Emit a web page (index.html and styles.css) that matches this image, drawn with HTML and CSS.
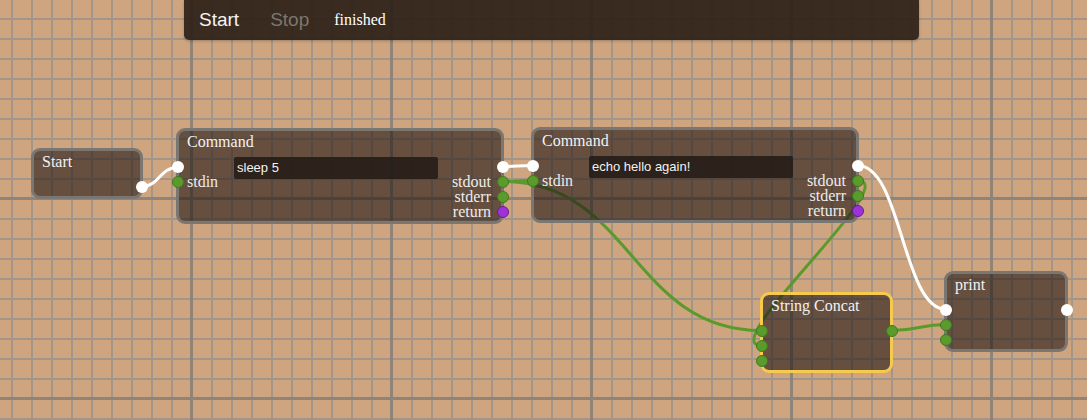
FILE: index.html
```html
<!DOCTYPE html>
<html>
<head>
<meta charset="utf-8">
<link rel="stylesheet" href="styles.css">
</head>
<body>
<div class="canvas">
  <svg class="wires" width="1087" height="420" viewBox="0 0 1087 420">
    <path class="w-exec" d="M141.5,186.5 C159.5,186.5 159.5,167.5 177.5,167.5"/>
    <path class="w-exec" d="M502.5,166.5 C517.5,166.5 517.5,165.5 532.5,165.5"/>
    <path class="w-exec" d="M857.5,165.5 C902,165.5 902,309.5 946.5,309.5"/>
    <path class="w-data" d="M502.5,181.5 C517.5,181.5 517.5,180.5 532.5,180.5"/>
    <path class="w-data" d="M502.5,181.5 C632,181.5 632,330.5 761.5,330.5"/>
    <path class="w-data" d="M857.5,180.5 C905,180.5 714,345.5 761.5,345.5"/>
    <path class="w-data" d="M891.5,330.5 C919,330.5 919,324.5 946.5,324.5"/>
  </svg>

  <div class="toolbar">
    <span class="tb-btn tb-start">Start</span>
    <span class="tb-btn tb-stop">Stop</span>
    <span class="tb-status">finished</span>
  </div>

  <div class="node n-start">
    <div class="title">Start</div>
    <div class="body">
      <div class="col-in"></div>
      <div class="col-out">
        <div class="row"><span class="dot out exec"></span></div>
      </div>
    </div>
  </div>

  <div class="node n-cmd1">
    <div class="title">Command</div>
    <div class="body">
      <div class="col-in cmd-in">
        <div class="row"><span class="dot in exec"></span></div>
        <div class="row"><span class="dot in data"></span><span class="lbl-in">stdin</span></div>
      </div>
      <div class="cmd-input">sleep 5</div>
      <div class="col-out cmd-out">
        <div class="row"><span class="dot out exec"></span></div>
        <div class="row">stdout<span class="dot out data"></span></div>
        <div class="row">stderr<span class="dot out data"></span></div>
        <div class="row">return<span class="dot out ret"></span></div>
      </div>
    </div>
  </div>

  <div class="node n-cmd2">
    <div class="title">Command</div>
    <div class="body">
      <div class="col-in cmd-in">
        <div class="row"><span class="dot in exec"></span></div>
        <div class="row"><span class="dot in data"></span><span class="lbl-in">stdin</span></div>
      </div>
      <div class="cmd-input">echo hello again!</div>
      <div class="col-out cmd-out">
        <div class="row"><span class="dot out exec"></span></div>
        <div class="row">stdout<span class="dot out data"></span></div>
        <div class="row">stderr<span class="dot out data"></span></div>
        <div class="row">return<span class="dot out ret"></span></div>
      </div>
    </div>
  </div>

  <div class="node n-concat selected">
    <div class="title">String Concat</div>
    <div class="body">
      <div class="col-in">
        <div class="row"><span class="dot in data"></span></div>
        <div class="row"><span class="dot in data"></span></div>
        <div class="row"><span class="dot in data"></span></div>
      </div>
      <div class="col-out">
        <div class="row"><span class="dot out data"></span></div>
      </div>
    </div>
  </div>

  <div class="node n-print">
    <div class="title">print</div>
    <div class="body">
      <div class="col-in">
        <div class="row"><span class="dot in exec"></span></div>
        <div class="row"><span class="dot in data"></span></div>
        <div class="row"><span class="dot in data"></span></div>
      </div>
      <div class="col-out">
        <div class="row"><span class="dot out exec"></span></div>
      </div>
    </div>
  </div>
</div>
</body>
</html>
```

FILE: styles.css
```css
* { box-sizing: border-box; }

html, body {
  margin: 0;
  padding: 0;
}

body {
  font-family: "Liberation Serif", "Times New Roman", serif;
  background: #cfa57f;
}

.canvas {
  position: relative;
  width: 1087px;
  height: 420px;
  overflow: hidden;
  background-color: #cfa57f;
  background-image:
    linear-gradient(to right, #8e847a 0, #8e847a 3px, transparent 3px),
    linear-gradient(to bottom, #8e847a 0, #8e847a 3px, transparent 3px),
    linear-gradient(to right, #a39689 0, #a39689 2px, transparent 2px),
    linear-gradient(to bottom, #a39689 0, #a39689 2px, transparent 2px);
  background-size: 200px 200px, 200px 200px, 20px 20px, 20px 20px;
  background-position: 190px 0, 0 197px, 11px 0, 0 18px;
}

.wires {
  position: absolute;
  left: 0;
  top: 0;
}

.wires path {
  fill: none;
  stroke-width: 3;
  stroke-linecap: round;
}

.w-exec { stroke: #ffffff; }
.w-data { stroke: #5a9a2c; }

.toolbar {
  position: absolute;
  left: 184px;
  top: 0;
  width: 735px;
  height: 40px;
  display: flex;
  align-items: center;
  padding-left: 15px;
  background: rgba(44, 33, 23, 0.92);
  border-radius: 0 0 5px 5px;
  box-shadow: 0 1px 3px rgba(0, 0, 0, 0.25);
}

.tb-btn {
  font-family: "Liberation Sans", Arial, sans-serif;
  font-size: 19px;
  line-height: 22px;
}

.tb-start {
  color: #f4f4f4;
  margin-right: 31px;
}

.tb-stop {
  color: #7e766e;
  margin-right: 25px;
}

.tb-status {
  font-family: "Liberation Serif", "Times New Roman", serif;
  font-size: 16px;
  color: #ffffff;
  line-height: 20px;
}

.node {
  position: absolute;
  border: 3px solid #7a7672;
  border-radius: 9px;
  background: rgba(32, 22, 18, 0.6);
  padding: 2px 0 2px;
  color: #ececec;
}

.node.selected {
  border-color: #f6ca4c;
}

.title {
  font-size: 16px;
  line-height: 18px;
  padding-left: 8px;
  color: #f2f2f2;
  white-space: nowrap;
}

.body {
  display: flex;
  margin-top: 8px;
}

.col-in {
  flex: 1;
}

.col-out {
  text-align: right;
}

.row {
  position: relative;
  height: 15px;
  line-height: 15px;
  font-size: 16px;
  white-space: nowrap;
}

.lbl-in {
  padding-left: 8px;
}

.cmd-in {
  flex: 0 0 55px;
}

.cmd-out {
  flex: 1;
  padding-right: 10px;
}

.cmd-input {
  flex: 0 0 204px;
  height: 22px;
  margin-top: -2px;
  padding-left: 3px;
  background: rgba(34, 26, 21, 0.85);
  border-radius: 2px;
  font-family: "Liberation Sans", Arial, sans-serif;
  font-size: 13px;
  line-height: 22px;
  color: #f2f2f2;
  white-space: nowrap;
}

.dot {
  position: absolute;
  top: 1.5px;
  width: 12px;
  height: 12px;
  border-radius: 50%;
}

.dot.in { left: -7.5px; }
.dot.out { right: -7.5px; }
.cmd-out .dot.out { right: -17.5px; }

.dot.exec {
  background: #ffffff;
}

.dot.data {
  background: #5b9a2c;
  border: 1.5px solid #3f7b1e;
}

.dot.ret {
  background: #9c33d8;
  border: 1.5px solid #6a1b8e;
}

.n-start {
  left: 31px;
  top: 148px;
  width: 112px;
}

.n-cmd1 {
  left: 176px;
  top: 128px;
  width: 328px;
}

.n-cmd2 {
  left: 531px;
  top: 127px;
  width: 328px;
}

.n-concat {
  left: 760px;
  top: 292px;
  width: 133px;
}

.n-print {
  left: 944px;
  top: 271px;
  width: 124px;
}
```
